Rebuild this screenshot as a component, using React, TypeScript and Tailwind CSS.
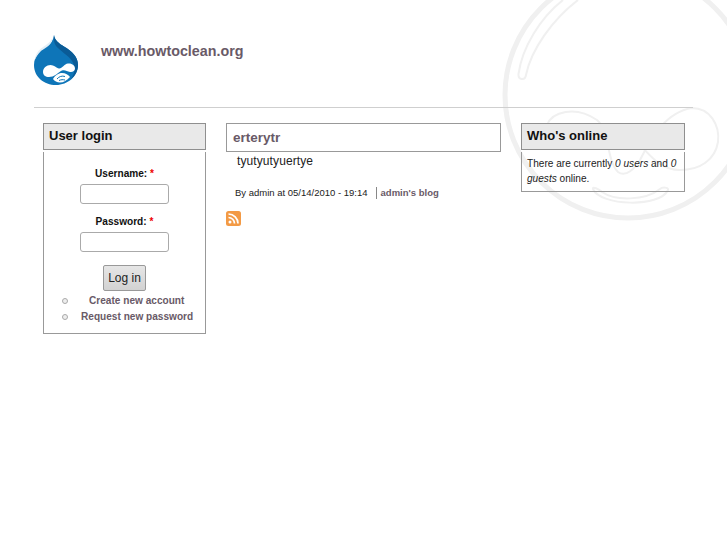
const sans = { fontFamily: '"Liberation Sans", Arial, sans-serif' };

function DrupalLogo() {
  return (
    <svg width="44" height="50" viewBox="0 0 44 50" className="block">
      <path
        d="M20 0C20.500 5 25 8.500 30 11.500 38 16 44 22 44 30 44 41 34 50 22 50 10 50 0 42 0 30 0 20 8 14 13 11 17 8.500 19.500 5 20 0z"
        fill="#0e75b8"
      />
      <path
        d="M20 0C20.500 5 25 8.500 30 11.500 38 16 44 22 44 30 44 36 41 41 37 44 41 38 42 32 38 26 34 20 26 16 22 11 20 8 19.500 4 20 0z"
        fill="#0a5b96"
      />
      <path d="M18.500 3C16 8 11 10.500 7 13.500 3 16.500 1 21 .8 25 3 20 6 16 10 14 14 11.500 18 9 18.500 3z" fill="#e3eef6" />
      <path
        d="M9 37C9 33 12.500 30 16.500 30 20 30 22.500 33 25 33.500 28 34 30 29 34 28.500 38 28 41 30.500 41 33.500 41 36 38.500 37.500 36 37 33 36.500 31 34.500 28 35.500 25 36.500 23 40 18.500 41.500 13 43 9 41 9 37z"
        fill="#fff"
      />
      <path d="M19 44C21 40.500 24.500 38 28 38 31.500 38 34.500 40 36 42 33 45.500 29.500 47.500 26 47.500 23 47.500 20.500 46 19 44z" fill="#fff" />
      <path d="M23 44C25 41.500 28 40.500 31 41.500M25 45.500C27 44.500 29 44.500 31 45" stroke="#0e75b8" strokeWidth="1" fill="none" />
    </svg>
  );
}

function Watermark() {
  return (
    <svg width="227" height="225" viewBox="500 0 227 225" className="absolute right-0 top-0" fill="none">
      <circle cx="628" cy="95" r="123" stroke="#f0f0f0" strokeWidth="5" />
      <path
        d="M563 0C540 18 522 48 518.500 74 518 80 525 81 526 75 531 50 552 20 578 0"
        stroke="#f0f0f0"
        strokeWidth="2"
      />
      <path
        d="M547 125C552 112 575 105 597 120 610 130 606 160 618 172 626 178 635 168 640 160 650 140 665 112 692 108 710 108 720 125 718 142 715 160 700 170 680 170 660 170 650 155 640 145"
        stroke="#f0f0f0"
        strokeWidth="2"
      />
      <path
        d="M593 189C600 206 660 208 668 190 669 187 662 187 660 189 645 201 615 201 602 192 599 189 592 186 593 189z"
        stroke="#f0f0f0"
        strokeWidth="2"
      />
    </svg>
  );
}

function BlockTitle({ children }: { children: string }) {
  return (
    <h2 className="h-[27px] border border-[#8f8f8f] bg-[#e9e9e9] pl-[5px] text-[13px] font-bold leading-[24px] text-[#111]">
      {children}
    </h2>
  );
}

function LoginField({ label }: { label: string }) {
  return (
    <div className="flex flex-col items-center">
      <label className="text-[10.100px] font-bold leading-[13px] text-[#111]">
        {label}: <span className="text-[#e00]">*</span>
      </label>
      <input className="mt-[4px] h-[20px] w-[89px] rounded-[3px] border border-[#aaa] bg-white" />
    </div>
  );
}

function LinkItem({ gap, children }: { gap: string; children: string }) {
  return (
    <li className="flex items-center">
      <span className="ml-[18px] h-[6px] w-[6px] rounded-full border border-[#aaa] bg-[#eee]" />
      <a href="#" className={gap}>
        {children}
      </a>
    </li>
  );
}

export default function App() {
  return (
    <div className="relative h-[545px] w-[727px] overflow-hidden bg-white" style={sans}>
      <Watermark />

      <div className="relative ml-[34px] w-[659px]">
        <header className="box-content flex h-[72px] border-b border-[#cfcfcf] pt-[35px]">
          <DrupalLogo />
          <a href="#" className="ml-[23px] mt-[6px] text-[14.300px] font-bold leading-[20px] text-[#695a67]">
            www.howtoclean.org
          </a>
        </header>

        <div className="flex items-start pl-[9px] pt-[15px]">
          <aside className="w-[163px]">
            <BlockTitle>User login</BlockTitle>
            <div className="mt-[2px] h-[182px] border-x border-b border-[#999] pt-[15px]">
              <div className="flex flex-col gap-[11px]">
                <LoginField label="Username" />
                <LoginField label="Password" />
              </div>
              <div className="mt-[13px] flex justify-center">
                <button className="h-[26px] w-[43px] rounded-[2px] border border-[#999] bg-gradient-to-b from-[#e6e6e6] to-[#d2d2d2] text-[12px] text-[#222]">
                  Log in
                </button>
              </div>
              <ul className="mt-[2px] text-[10.100px] font-bold leading-[16px] text-[#695a67]">
                <LinkItem gap="ml-[21px]">Create new account</LinkItem>
                <LinkItem gap="ml-[13px]">Request new password</LinkItem>
              </ul>
            </div>
          </aside>

          <main className="ml-[20px] w-[275px]">
            <h2 className="h-[29px] border border-[#999] bg-white pl-[6px] text-[13.500px] font-bold leading-[27px] text-[#695a67]">
              erterytr
            </h2>
            <p className="ml-[11px] mt-[2px] text-[12px] leading-[15px] tracking-[0.1px] text-[#222]">tyutyutyuertye</p>
            <div className="ml-[9px] mt-[18px] flex items-center text-[9.500px] leading-[12px] text-[#222]">
              <span>By admin at 05/14/2010 - 19:14</span>
              <a href="#" className="ml-[8px] border-l border-[#888] pl-[4px] font-bold text-[#695a67]">
                admin's blog
              </a>
            </div>
            <svg width="15" height="15" viewBox="0 0 15 15" className="mt-[12px] block">
              <rect width="15" height="15" rx="2.500" fill="#f39a45" />
              <circle cx="4" cy="11" r="1.500" fill="#fff" />
              <path d="M2.500 6.500a6 6 0 0 1 6 6M2.500 3a9.500 9.500 0 0 1 9.500 9.500" stroke="#fff" strokeWidth="1.700" fill="none" />
            </svg>
          </main>

          <aside className="ml-[20px] w-[164px]">
            <BlockTitle>Who's online</BlockTitle>
            <div className="mt-[2px] h-[40px] border-x border-b border-[#999] pl-[5px] pt-[4px] text-[10.100px] leading-[15px] text-[#222]">
              There are currently <em>0 users</em> and <em>0</em> <em>guests</em> online.
            </div>
          </aside>
        </div>
      </div>
    </div>
  );
}
